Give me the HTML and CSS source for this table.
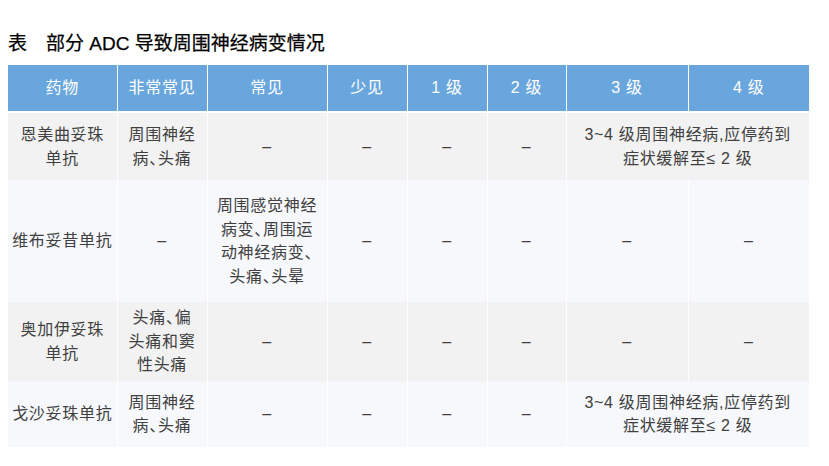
FILE: index.html
```html
<!DOCTYPE html>
<html lang="zh-CN">
<head>
<meta charset="utf-8">
<title>部分 ADC 导致周围神经病变情况</title>
<link rel="stylesheet" href="styles.css">
</head>
<body>
<div class="page">
  <h1 class="caption">表　部分 ADC 导致周围神经病变情况</h1>
  <table class="adc">
    <colgroup>
      <col class="c1"><col class="c2"><col class="c3"><col class="c4">
      <col class="c5"><col class="c6"><col class="c7"><col class="c8">
    </colgroup>
    <thead>
      <tr class="head">
        <th>药物</th><th>非常常见</th><th>常见</th><th>少见</th>
        <th>1 级</th><th>2 级</th><th>3 级</th><th>4 级</th>
      </tr>
    </thead>
    <tbody>
      <tr class="r1 gray">
        <td class="drug">恩美曲妥珠<br>单抗</td>
        <td>周围神经<br>病、头痛</td>
        <td>–</td><td>–</td><td>–</td><td>–</td>
        <td colspan="2">3~4 级周围神经病,应停药到<br>症状缓解至≤ 2 级</td>
      </tr>
      <tr class="r2 blue">
        <td class="drug">维布妥昔单抗</td>
        <td>–</td>
        <td class="just">周围感觉神经病变、周围运动神经病变、头痛、头晕</td>
        <td>–</td><td>–</td><td>–</td><td>–</td><td>–</td>
      </tr>
      <tr class="r3 gray">
        <td class="drug">奥加伊妥珠<br>单抗</td>
        <td>头痛、偏<br>头痛和窦<br>性头痛</td>
        <td>–</td><td>–</td><td>–</td><td>–</td><td>–</td><td>–</td>
      </tr>
      <tr class="r4 blue">
        <td class="drug">戈沙妥珠单抗</td>
        <td>周围神经<br>病、头痛</td>
        <td>–</td><td>–</td><td>–</td><td>–</td>
        <td colspan="2">3~4 级周围神经病,应停药到<br>症状缓解至≤ 2 级</td>
      </tr>
    </tbody>
  </table>
</div>
</body>
</html>
```

FILE: styles.css
```css
html, body {
  margin: 0;
  padding: 0;
  background: #ffffff;
}

.page {
  padding: 32px 0 0 8px;
  font-family: "Liberation Sans", "Noto Sans CJK SC", sans-serif;
  color: #404040;
}

.caption {
  margin: 0 0 9px 0;
  font-size: 19px;
  line-height: 24px;
  font-weight: 400;
  color: #000000;
  -webkit-text-stroke: 0.25px #000000;
}

.adc {
  border-collapse: collapse;
  table-layout: fixed;
  width: 801px;
  font-size: 16px;
  line-height: 23.5px;
  letter-spacing: 0.7px;
}

.c1 { width: 109px; }
.c2 { width: 90px; }
.c3 { width: 120px; }
.c4 { width: 80px; }
.c5 { width: 80px; }
.c6 { width: 79px; }
.c7 { width: 122px; }
.c8 { width: 121px; }

.adc th,
.adc td {
  padding: 2px 8px;
  text-align: center;
  vertical-align: middle;
  border-left: 1px solid #ffffff;
  border-right: 1px solid #ffffff;
}

.adc td {
  font-feature-settings: "halt";
}

.adc th:first-child,
.adc td:first-child {
  border-left: none;
}

.adc th:last-child,
.adc td:last-child {
  border-right: none;
}

.adc td.drug {
  padding-left: 2px;
  padding-right: 2px;
  white-space: nowrap;
}

.head th {
  height: 42px;
  background: #6aa6de;
  color: #ffffff;
  font-weight: normal;
  border-bottom: 2px solid #ffffff;
}

.gray td { background: #f2f2f2; }
.blue td { background: #f6f8fc; }

.r1 td { height: 63px; }
.r2 td { height: 118px; }
.r3 td { height: 75px; }
.r4 td { height: 62px; }

.just {
  text-align: justify;
  text-justify: inter-character;
  text-align-last: center;
}
```
